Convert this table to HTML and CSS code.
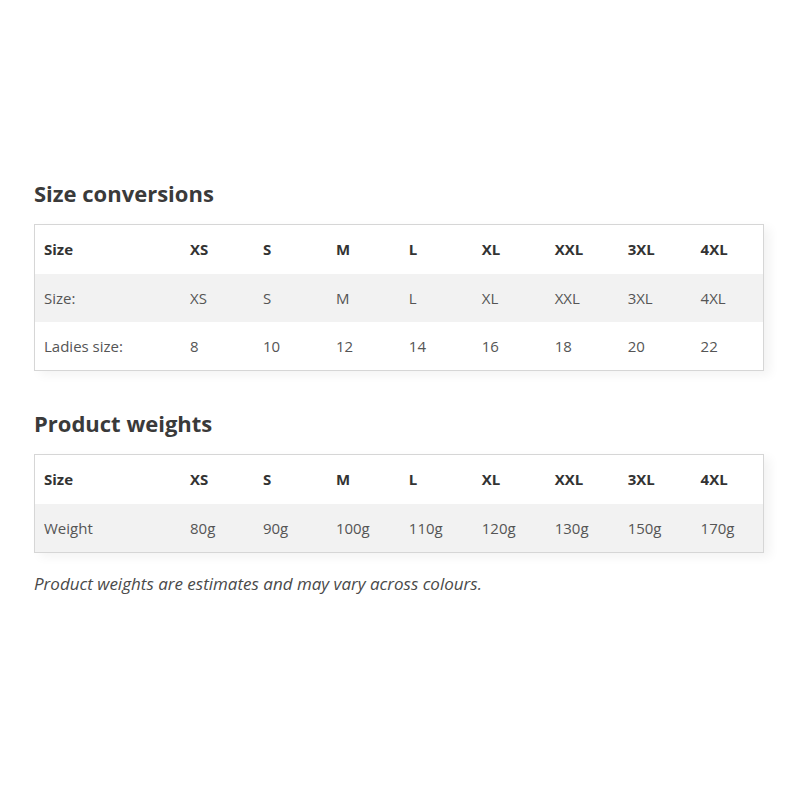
FILE: index.html
```html
<!DOCTYPE html>
<html>
<head>
<meta charset="utf-8">
<link rel="stylesheet" href="styles.css">
</head>
<body>
<main class="page">
  <h2 class="title">Size conversions</h2>
  <table class="chart spaced">
    <thead>
      <tr><th>Size</th><th>XS</th><th>S</th><th>M</th><th>L</th><th>XL</th><th>XXL</th><th>3XL</th><th>4XL</th></tr>
    </thead>
    <tbody>
      <tr class="alt"><td>Size:</td><td>XS</td><td>S</td><td>M</td><td>L</td><td>XL</td><td>XXL</td><td>3XL</td><td>4XL</td></tr>
      <tr><td>Ladies size:</td><td>8</td><td>10</td><td>12</td><td>14</td><td>16</td><td>18</td><td>20</td><td>22</td></tr>
    </tbody>
  </table>
  <h2 class="title">Product weights</h2>
  <table class="chart">
    <thead>
      <tr><th>Size</th><th>XS</th><th>S</th><th>M</th><th>L</th><th>XL</th><th>XXL</th><th>3XL</th><th>4XL</th></tr>
    </thead>
    <tbody>
      <tr class="alt"><td>Weight</td><td>80g</td><td>90g</td><td>100g</td><td>110g</td><td>120g</td><td>130g</td><td>150g</td><td>170g</td></tr>
    </tbody>
  </table>
  <p class="note">Product weights are estimates and may vary across colours.</p>
</main>
</body>
</html>
```

FILE: styles.css
```css
html, body {
  margin: 0;
  padding: 0;
  background: #ffffff;
}
body {
  font-family: "Open Sans", "Liberation Sans", sans-serif;
  color: #444444;
}
.page {
  padding: 178px 0 0 34px;
  width: 730px;
}
.title {
  font-size: 22px;
  font-weight: 700;
  line-height: 30px;
  color: #3a3a3a;
  margin: 0 0 16px 0;
}
.chart {
  width: 730px;
  border-collapse: collapse;
  border: 1px solid #d6d6d6;
  box-shadow: 6px 4px 10px rgba(0, 0, 0, 0.05);
  table-layout: fixed;
  font-size: 15px;
  line-height: 21px;
}
.chart.spaced {
  margin-bottom: 37px;
}
.chart th, .chart td {
  text-align: left;
  padding: 14px 10px 13px 10px;
}
.chart th {
  padding-bottom: 14px;
}
.chart th:first-child, .chart td:first-child {
  width: 127px;
  padding-left: 9px;
  padding-right: 9px;
}
.chart th {
  font-weight: 700;
  color: #333333;
}
.chart td {
  font-weight: 400;
  color: #555555;
}
.chart tr.alt td {
  background: #f2f2f2;
}
.note {
  margin: 19px 0 0 0;
  font-style: italic;
  font-size: 17px;
  line-height: 24px;
  color: #4a4a4a;
}
```
